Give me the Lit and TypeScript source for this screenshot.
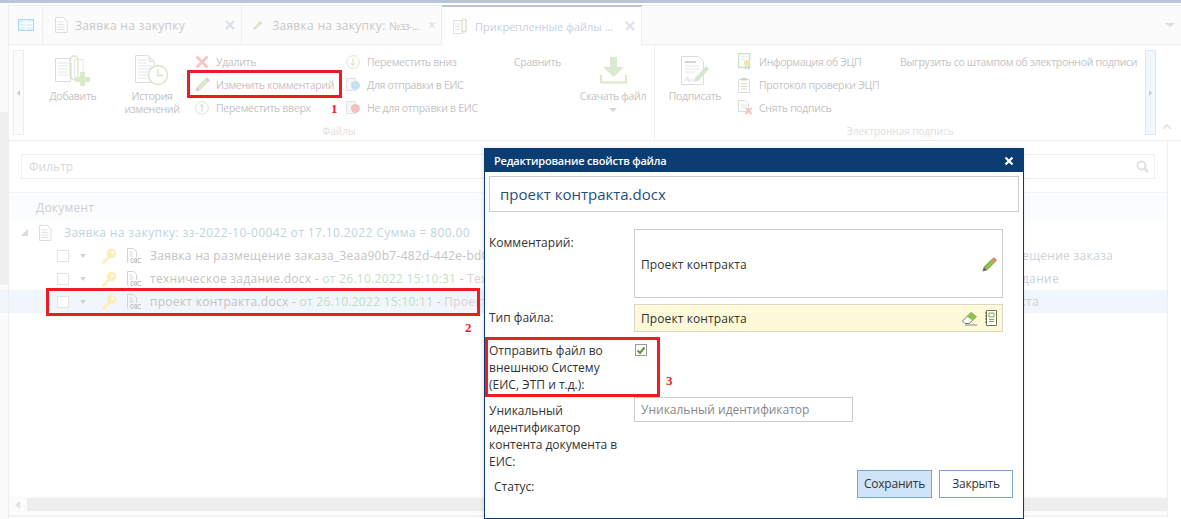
import { LitElement, html, css } from "lit";
import { customElement } from "lit/decorators.js";

// icons, already washed out like the page behind the dialog
const docLines = html`<svg width="14" height="16" viewBox="0 0 14 16"><path d="M1.500.500h8l3.500 3.500v11.500h-11.500z" fill="#fff" stroke="#dedede"/><path d="M3.500 5h6M3.500 7.500h7M3.500 10h7M3.500 12.500h7" stroke="#e2e2e2"/></svg>`;
const pencil = (w = 18) => html`<svg width="${w}" height="${w}" viewBox="0 0 16 16"><path d="M2 10.500 10.500 2l3.500 3.500L5.500 14z" fill="#d8e7ca"/><path d="M4 12.500 12 4.500" stroke="#e9f1e0"/><path d="M10.500 2l1.500-1.500h1l2.500 2.500v1L14 5.500z" fill="#f4c6ca"/><path d="M2 10.500 5.500 14 .5 15.500z" fill="#cdcdcd"/></svg>`;
const tabGrid = html`<svg width="16" height="12" viewBox="0 0 16 12"><rect x=".5" y=".5" width="15" height="11" fill="#dff1fb" stroke="#a9d8f2"/><path d="M8 1v10M9 4h6M9 7.500h6M2 4h5M2 7.500h5" stroke="#fff" stroke-width="1.500"/></svg>`;
const clipSmall = html`<svg width="15" height="16" viewBox="0 0 15 16"><path d="M.5 2.500h9v13h-9z" fill="#fff" stroke="#dfdfdf"/><path d="M2 6h5M2 8.500h5M2 11h5" stroke="#e4e4e4"/><path d="M9 12V3a2 2 0 0 1 4 0v9a1.800 1.800 0 0 1-4 0" fill="#fff" stroke="#cfe0bf" stroke-width="1.200"/></svg>`;
const tabClose = html`<svg width="10" height="10" viewBox="0 0 10 10"><path d="M1 1l8 8M9 1 1 9" stroke="#dbe1ea" stroke-width="2.200"/></svg>`;
const addIcon = html`<svg width="36" height="31" viewBox="0 0 36 31"><path d="M.5 3.500h15v23h-15z" fill="#fff" stroke="#dcdcdc"/><path d="M3 8h10M3 11h10M3 14h10M3 17h10M3 20h10" stroke="#e6e6e6"/><path d="M19.500 4.500h8.500v18h-8.500z" fill="#fff" stroke="#e6e6e6"/><path d="M15 21V5a4 4 0 0 1 8 0v16a3.500 3.500 0 0 1-7 0V8" fill="none" stroke="#d6e6c9" stroke-width="1.300"/><path d="M25 17h5v5h5v5h-5v4h-5v-4h-5v-5h5z" fill="#d8ebca"/></svg>`;
const historyIcon = html`<svg width="34" height="31" viewBox="0 0 34 31"><path d="M.5.500h13l6 6v21h-19z" fill="#fff" stroke="#dedede"/><path d="M14 1v5.500h5" fill="#f1f1f1" stroke="#e2e2e2"/><path d="M3 5h9M3 8h9M3 11h14M3 14h14M3 17h10M3 20h10M3 23h9" stroke="#e6e6e6"/><circle cx="23" cy="20" r="9.500" fill="#fff" stroke="#d3e4c6" stroke-width="1.300"/><path d="M23 14v6.500h5" fill="none" stroke="#d3e4c6" stroke-width="1.300"/></svg>`;
const cross = html`<svg width="14" height="14" viewBox="0 0 14 14"><path d="M1.500 1.500l11 11M12.500 1.500l-11 11" stroke="#f5c3c1" stroke-width="2.600"/></svg>`;
const arrowCircle = (up: boolean) => html`<svg width="14" height="14" viewBox="0 0 14 14"><circle cx="7" cy="7" r="6.300" fill="#fff" stroke="#dbe5d2"/><path d="${up ? "M7 11V3.500M4.500 6 7 3.500 9.500 6" : "M7 3v7.500M4.500 8 7 10.500 9.500 8"}" fill="none" stroke="#cfe0bf"/></svg>`;
const globeDoc = (minus: boolean) => html`<svg width="15" height="15" viewBox="0 0 15 15"><path d="M.5 1.500h9v12h-9z" fill="#f7f7f7" stroke="#e3e3e3"/><circle cx="9.500" cy="8.500" r="4.500" fill="${minus ? "#f5bfbf" : "#c6e1f4"}"/>${minus ? html`<path d="M7 8.500h5" stroke="#fff" stroke-width="2"/>` : html`<path d="M7 6.500c2 0 3.500 1 2.500 2.500s-2 1-2 3" fill="none" stroke="#e6f3fb" stroke-width="1.500"/>`}</svg>`;
const download = html`<svg width="27" height="27" viewBox="0 0 27 27"><path d="M10 0h7v10h7L13.500 20 3 10h7z" fill="#dbe9cf"/><path d="M1 18v7.500h25V18" fill="none" stroke="#dbe9cf" stroke-width="2"/></svg>`;
const signIcon = html`<svg width="28" height="29" viewBox="0 0 28 29"><path d="M.5.500h17l5 5v23h-22z" fill="#fff" stroke="#dcdcdc"/><path d="M4 6h11" stroke="#d4d4d4" stroke-width="2"/><path d="M4 10h14M4 13h14M4 16h10" stroke="#e6e6e6"/><path d="M4 25c2-5 3-4 3-1s2 1 3 0 1 1 3 0" fill="none" stroke="#d0dbe6"/><path d="M14 22 25 10l3 3-11 12-4 1z" fill="#d8e7ca"/></svg>`;
const certIcon = html`<svg width="14" height="17" viewBox="0 0 14 17"><path d="M.5.500h11v14h-11z" fill="#fff" stroke="#cfe2c0" stroke-width="1.500"/><path d="M3 4h6M3 6.500h4" stroke="#dfe9d6"/><circle cx="9" cy="10" r="3" fill="#f6e3ac"/><path d="M7 13h1.500v3H7zM10 13h1.500v3H10z" fill="#bcd3ea"/></svg>`;
const clipboard = html`<svg width="12" height="16" viewBox="0 0 12 16"><path d="M.5 2.500h11v13H.5z" fill="#fff" stroke="#dcdcdc"/><path d="M3.500 1h5v2.500h-5z" fill="#cfcfcf"/><path d="M3 7h6M3 9.500h6M3 12h6" stroke="#d0e2c1"/></svg>`;
const unsign = html`<svg width="15" height="15" viewBox="0 0 15 15"><path d="M.5.500h7l3 3v8h-10z" fill="#fff" stroke="#dcdcdc"/><path d="M2.500 5h6M2.500 7h5" stroke="#e4e4e4"/><path d="M7.500 8l6 6M13.500 8l-6 6" stroke="#f5c3c1" stroke-width="2"/></svg>`;
const key = html`<svg width="16" height="16" viewBox="0 0 16 16"><circle cx="10.500" cy="5.500" r="4.800" fill="#fbeebb"/><circle cx="11.500" cy="4.500" r="1.300" fill="#fff"/><path d="M7 8 1 14v1.500h3V14h2v-2l3-2z" fill="#fbeebb"/></svg>`;
const docFile = html`<svg width="16" height="16" viewBox="0 0 16 16"><path d="M1.500.500h6l3 3v5.500M1.500.500v14" fill="none" stroke="#d4d4d4"/><path d="M3.500 4h3M3.500 6h4M3.500 8h4" stroke="#dadada"/><path d="M5 10.500h2c1 0 1 4 0 4H5zM9 10.500h1.500v4H9zM12 10.500h3M12 10.500v4h3" fill="none" stroke="#c6c6c6"/></svg>`;
const searchIcon = html`<svg width="13" height="13" viewBox="0 0 13 13"><circle cx="5.500" cy="5.500" r="4" fill="none" stroke="#e2e2e2" stroke-width="2"/><path d="M8.500 8.500l3.500 3.500" stroke="#e2e2e2" stroke-width="2.500"/></svg>`;
const eraser = html`<svg width="16" height="15" viewBox="0 0 16 15"><path d="M.5 10 9 1.500l5 4-6.500 7H3z" fill="#fff" stroke="#777"/><path d="M5 5.500 9 1.500l6 4-4 4.500z" fill="#8fc249"/><path d="M3 14h12" stroke="#888"/></svg>`;
const lookup = html`<svg width="12" height="16" viewBox="0 0 12 16"><path d="M1.500.500h10v15h-10z" fill="#fff" stroke="#6b7a55"/><path d="M4 3h5v4H4z" fill="#fff" stroke="#7eaa3a"/><path d="M4 9.500h5M4 11.500h5" stroke="#7eaa3a"/><path d="M0 3h2M0 6h2M0 9h2M0 12h2" stroke="#555"/></svg>`;
const pencilDark = html`<svg width="15" height="15" viewBox="0 0 16 16"><path d="M2 10.500 10.500 2l3.500 3.500L5.500 14z" fill="#7fb63c"/><path d="M4 12.500 12 4.500" stroke="#b6d88c"/><path d="M10.500 2l1.500-1.500h1l2.500 2.500v1L14 5.500z" fill="#e8707c"/><path d="M2 10.500 5.500 14 .5 15.500z" fill="#666"/></svg>`;

const smallCols = [
  [
    { icon: cross, text: "Удалить" },
    { icon: pencil(15), text: "Изменить комментарий" },
    { icon: arrowCircle(true), text: "Переместить вверх" },
  ],
  [
    { icon: arrowCircle(false), text: "Переместить вниз" },
    { icon: globeDoc(false), text: "Для отправки в ЕИС" },
    { icon: globeDoc(true), text: "Не для отправки в ЕИС" },
  ],
];

const signCol = [
  { icon: certIcon, text: "Информация об ЭЦП" },
  { icon: clipboard, text: "Протокол проверки ЭЦП" },
  { icon: unsign, text: "Снять подпись" },
];

const rows = [
  { name: "Заявка на размещение заказа_3eaa90b7-482d-442e-bd0c-51f0a7c1e2aa.docx", date: "", note: "", tail: "Заявка на размещение заказа", end: 1113, sel: false },
  { name: "техническое задание.docx", date: "от 26.10.2022 15:10:31", note: "Техническое задание", tail: "Техническое задание", end: 1059, sel: false },
  { name: "проект контракта.docx", date: "от 26.10.2022 15:10:11", note: "Проект контракта", tail: "Проект контракта", end: 1039, sel: true },
];

@customElement("app-root")
export class AppRoot extends LitElement {
  static styles = css`
    :host {
      display: block;
      position: relative;
      width: 1181px;
      height: 519px;
      overflow: hidden;
      background: #fff;
      font-family: "Open Sans", "Noto Sans", sans-serif;
      font-size: 11px;
      color: #c4c4c4;
    }
    .topbar {
      height: 3px;
      background: #b9c6da;
    }
    .shell {
      display: flex;
      height: 516px;
    }
    .rail {
      width: 8px;
      flex: none;
      background: #fbfbfb;
      border-right: 1px solid #eee;
      padding-top: 109px;
      box-sizing: content-box;
    }
    .rail-thumb {
      height: 173px;
      background: #f0f0f0;
    }
    .rail-sel {
      height: 23px;
      margin-top: 5px;
      background: #f0f6fc;
    }
    .main {
      flex: 1;
      min-width: 0;
      display: flex;
      flex-direction: column;
      padding-top: 2px;
    }

    /* tabs */
    .tabs {
      display: flex;
      height: 40px;
      background: #fbfbfb;
      border-top: 1px solid #eee;
      border-bottom: 1px solid #eee;
      box-sizing: border-box;
    }
    .tab-home {
      width: 33px;
      display: flex;
      align-items: center;
      justify-content: center;
      border-right: 1px solid #eee;
      box-sizing: content-box;
    }
    .tab {
      width: 199px;
      display: flex;
      align-items: center;
      gap: 7px;
      padding: 0 6px 0 11px;
      box-sizing: border-box;
      border-right: 1px solid #eee;
      font-size: 12px;
      letter-spacing: 0.3px;
      color: #c9c9c9;
    }
    .tab + .tab {
      width: 200px;
    }
    .tab.wide-gap {
      gap: 10px;
    }
    .tab span {
      flex: 1;
      white-space: nowrap;
    }
    .tab small {
      font-size: 11px;
      letter-spacing: -0.6px;
    }
    .tab.active {
      background: #fff;
      color: #c4d2e6;
      font-size: 11px;
      letter-spacing: 0;
      margin-top: -1px;
      margin-bottom: -1px;
      border-top: 2px solid #b9c6da;
    }
    .tabs-more {
      margin-left: auto;
      align-self: center;
      margin-right: 6px;
      border: 4px solid transparent;
      border-top: 4px solid #dedede;
      border-left-width: 5px;
      border-right-width: 5px;
      margin-top: 4px;
    }

    /* ribbon */
    .ribbon {
      display: flex;
      height: 96px;
      border-bottom: 1px solid #eee;
      box-sizing: border-box;
      font-size: 10.5px;
      letter-spacing: -0.3px;
    }
    .scroll {
      width: 11px;
      height: 85px;
      margin-top: 5px;
      flex: none;
      box-sizing: border-box;
      border: 1px solid #eee;
      background: #fbfbfb;
      display: flex;
      align-items: center;
      justify-content: center;
    }
    .scroll.left {
      margin-left: 4px;
    }
    .scroll.right {
      background: #f2f7fc;
      border-color: #dfe7f1;
    }
    .tri-left {
      border: 3px solid transparent;
      border-right: 3px solid #ccc;
      border-left: 0;
    }
    .tri-right {
      border: 3px solid transparent;
      border-left: 3px solid #ccc;
      border-right: 0;
    }
    .group {
      display: flex;
      flex-direction: column;
      box-sizing: border-box;
      flex: none;
    }
    .group.files {
      width: 631px;
      border-right: 1px solid #eee;
    }
    .group.sign {
      width: 490px;
    }
    .group-body {
      display: flex;
      flex: 1;
      padding-top: 5px;
    }
    .group-name {
      text-align: center;
      height: 20px;
      padding-top: 5px;
      box-sizing: border-box;
      line-height: 13px;
      font-size: 10px;
      letter-spacing: 0;
      color: #e0e0e0;
    }
    .big {
      display: flex;
      flex-direction: column;
      align-items: center;
      text-align: center;
      line-height: 13px;
      flex: none;
    }
    .big-icon {
      height: 37px;
      display: flex;
      align-items: center;
      margin-top: 2px;
      margin-bottom: 1px;
    }
    .caret {
      margin-top: 5px;
      border: 4px solid transparent;
      border-top: 4px solid #d6d6d6;
    }
    .col {
      flex: none;
      display: flex;
      flex-direction: column;
    }
    .small {
      height: 23px;
      display: flex;
      align-items: center;
      white-space: nowrap;
    }
    .small i {
      width: 21px;
      flex: none;
      display: flex;
      font-style: normal;
    }
    .chevron {
      align-self: flex-end;
      margin: 0 0 10px 6px;
      line-height: 0;
    }

    /* list */
    .content {
      flex: 1;
      display: flex;
      min-height: 0;
    }
    .panel {
      width: 1159px;
      border-right: 1px solid #eee;
      box-sizing: border-box;
      display: flex;
      flex-direction: column;
      margin-bottom: 2px;
      border-bottom: 2px solid #f2f2f2;
    }
    .filter {
      margin: 13px 12px 0 12px;
      height: 25px;
      border: 1px solid #eee;
      box-sizing: border-box;
      display: flex;
      align-items: center;
      justify-content: space-between;
      padding: 0 5px 0 7px;
      font-size: 12px;
      color: #d8d8d8;
      flex: none;
    }
    .head {
      margin-top: 13px;
      height: 29px;
      flex: none;
      background: #fbfcfe;
      border-top: 1px solid #f1f4f8;
      box-sizing: border-box;
      padding-left: 27px;
      line-height: 29px;
      font-size: 12px;
      letter-spacing: 0.2px;
      color: #cfcfcf;
    }
    .tree-root {
      height: 23px;
      flex: none;
      display: flex;
      align-items: center;
      padding-left: 12px;
      white-space: nowrap;
      font-size: 12px;
      letter-spacing: 0.38px;
      color: #bcd6de;
    }
    .tree-root u {
      width: 0;
      height: 0;
      border-style: solid;
      border-width: 0 0 7px 7px;
      border-color: transparent transparent #d9d9d9 transparent;
      margin-right: 10px;
    }
    .tree-root span {
      margin-left: 12px;
    }
    .row {
      height: 23px;
      flex: none;
      display: flex;
      align-items: center;
      padding-left: 48px;
      white-space: nowrap;
      font-size: 12px;
      letter-spacing: 0.28px;
      position: relative;
    }
    .row.sel {
      background: #f0f6fc;
    }
    .box {
      width: 12px;
      height: 12px;
      border: 1px solid #e4e4e4;
      background: #fff;
      box-sizing: border-box;
      flex: none;
    }
    .row u {
      flex: none;
      border: 3px solid transparent;
      border-top: 4px solid #d2d2d2;
      margin: 3px 15px 0 11px;
    }
    .row .kd {
      display: flex;
      gap: 9px;
      margin-right: 8px;
      flex: none;
    }
    .row .name {
      flex: none;
      width: 334px;
      overflow: hidden;
      line-height: 23px;
    }
    .row em {
      font-style: normal;
      color: #c2dfc4;
    }
    .row s {
      text-decoration: none;
      color: #e3cfcf;
    }
    .tail {
      position: absolute;
      top: 0;
      left: 1015px;
      display: flex;
      justify-content: flex-end;
      overflow: hidden;
      line-height: 23px;
      color: #ccd3da;
    }
    .spacer {
      flex: 1;
    }
    .hscroll {
      height: 17px;
      flex: none;
      background: #fbfbfb;
      display: flex;
      align-items: center;
      padding-left: 6px;
      margin-bottom: 2px;
    }
    .hscroll div {
      flex: 1;
      margin-left: 7px;
      height: 13px;
      background: #eee;
    }

    /* dialog */
    .dialog {
      position: absolute;
      left: 484px;
      top: 148px;
      width: 540px;
      height: 371px;
      box-sizing: border-box;
      border: 1px solid #0b3d73;
      background: #fff;
      box-shadow: -1px 0 4px rgba(0, 0, 0, 0.12);
      font-size: 12px;
      line-height: 17px;
      color: #333;
      display: flex;
      flex-direction: column;
    }
    .dlg-head {
      height: 23px;
      flex: none;
      background: #0b3d73;
      color: #fff;
      display: flex;
      align-items: center;
      justify-content: space-between;
      padding: 0 9px;
      font-size: 11px;
      font-weight: 600;
      letter-spacing: -0.2px;
    }
    .dlg-name {
      margin: 4px 4px 0 4px;
      height: 36px;
      flex: none;
      box-sizing: border-box;
      border: 1px solid #ccc;
      padding-left: 10px;
      line-height: 34px;
      font-size: 15px;
      color: #1f4f80;
    }
    .form {
      display: grid;
      grid-template-columns: 145px 369px;
      padding-left: 4px;
      margin-top: 17px;
    }
    .form .lbl {
      padding-top: 5px;
    }
    .comment {
      height: 69px;
      box-sizing: border-box;
      border: 1px solid #ccc;
      display: flex;
      align-items: center;
      justify-content: space-between;
      padding: 1px 5px 0 6px;
      letter-spacing: 0.1px;
    }
    .ftype {
      margin-top: 6px;
      height: 28px;
      box-sizing: border-box;
      border: 1px solid #d9d9c8;
      background: #fdf9d9;
      display: flex;
      align-items: center;
      padding: 0 5px 0 6px;
      gap: 7px;
      letter-spacing: 0.1px;
    }
    .ftype span {
      flex: 1;
    }
    .lbl.t2 {
      margin-top: 6px;
      padding-top: 5px;
    }
    .lbl.send {
      padding-top: 0;
      margin-top: 10px;
      width: 135px;
    }
    .check {
      margin: 12px 0 0 1px;
      width: 12px;
      height: 12px;
      border: 1px solid #999;
      box-sizing: border-box;
      background: #fff;
      display: flex;
      align-items: center;
      justify-content: center;
    }
    .lbl.uid {
      margin-top: 4px;
      padding-top: 5px;
      width: 130px;
    }
    .uid-input {
      margin-top: 4px;
      width: 219px;
      height: 25px;
      box-sizing: border-box;
      border: 1px solid #ccc;
      line-height: 23px;
      padding-left: 6px;
      color: #888;
    }
    .foot {
      display: flex;
      padding: 0 10px 0 9px;
      height: 28px;
    }
    .foot .status {
      flex: 1;
      padding-top: 8px;
    }
    .btn {
      width: 74px;
      height: 28px;
      box-sizing: border-box;
      border: 1px solid #7ba3cd;
      background: #fff;
      text-align: center;
      line-height: 26px;
      letter-spacing: -0.2px;
      margin-left: 7px;
    }
    .btn.primary {
      width: 75px;
      background: #cfe5f7;
    }

    /* annotations */
    .mark {
      position: absolute;
      box-sizing: border-box;
      border: 3px solid #ed1c24;
    }
    .m1 {
      left: 187px;
      top: 70px;
      width: 155px;
      height: 28px;
    }
    .m2 {
      left: 46px;
      top: 288px;
      width: 434px;
      height: 28px;
    }
    .m3 {
      left: 485px;
      top: 337px;
      width: 175px;
      height: 60px;
    }
    .num {
      position: absolute;
      font-family: "Liberation Serif", serif;
      font-weight: 700;
      font-size: 13px;
      line-height: 14px;
      color: #ed1c24;
    }
    .n1 {
      left: 331px;
      top: 102px;
    }
    .n2 {
      left: 465px;
      top: 321px;
    }
    .n3 {
      left: 666px;
      top: 374px;
    }
  `;

  render() {
    return html`
      <div class="topbar"></div>
      <div class="shell">
        <div class="rail">
          <div class="rail-thumb"></div>
          <div class="rail-sel"></div>
        </div>
        <div class="main">
          <div class="tabs">
            <div class="tab-home">${tabGrid}</div>
            <div class="tab">${docLines}<span>Заявка на закупку</span>${tabClose}</div>
            <div class="tab wide-gap">${pencil(15)}<span>Заявка на закупку: <small>№зз-...</small></span>${tabClose}</div>
            <div class="tab active">${clipSmall}<span>Прикрепленные файлы ...</span>${tabClose}</div>
            <div class="tabs-more"></div>
          </div>
          <div class="ribbon">
            <div class="scroll left"><div class="tri-left"></div></div>
            <div class="group files">
              <div class="group-body">
                <div class="big" style="width:80px;margin-left:9px">
                  <div class="big-icon">${addIcon}</div>
                  Добавить
                </div>
                <div class="big" style="width:78px">
                  <div class="big-icon">${historyIcon}</div>
                  История<br />изменений
                </div>
                ${smallCols.map(
                  (col, i) => html`
                    <div class="col" style="width:${i ? 168 : 150}px;margin-left:${i ? 1 : 4}px">
                      ${col.map((it) => html`<div class="small"><i>${it.icon}</i>${it.text}</div>`)}
                    </div>
                  `
                )}
                <div class="col" style="width:59px">
                  <div class="small">Сравнить</div>
                </div>
                <div class="big" style="width:80px">
                  <div class="big-icon">${download}</div>
                  Скачать файл
                  <div class="caret"></div>
                </div>
              </div>
              <div class="group-name">Файлы</div>
            </div>
            <div class="group sign">
              <div class="group-body">
                <div class="big" style="width:70px;margin-left:5px">
                  <div class="big-icon">${signIcon}</div>
                  Подписать
                </div>
                <div class="col" style="width:162px;margin-left:8px">
                  ${signCol.map((it) => html`<div class="small"><i>${it.icon}</i>${it.text}</div>`)}
                </div>
                <div class="col">
                  <div class="small">Выгрузить со штампом об электронной подписи</div>
                </div>
              </div>
              <div class="group-name">Электронная подпись</div>
            </div>
            <div class="scroll right"><div class="tri-right"></div></div>
            <div class="chevron">
              <svg width="10" height="6" viewBox="0 0 10 6"><path d="M1 5l4-4 4 4" fill="none" stroke="#e0e0e0" stroke-width="1.500" /></svg>
            </div>
          </div>
          <div class="content">
            <div class="panel">
              <div class="filter">Фильтр ${searchIcon}</div>
              <div class="head">Документ</div>
              <div class="tree-root">
                <u></u>${docLines}<span>Заявка на закупку: зз-2022-10-00042 от 17.10.2022 Сумма = 800.00</span>
              </div>
              ${rows.map(
                (r) => html`
                  <div class="row ${r.sel ? "sel" : ""}">
                    <div class="box"></div>
                    <u></u>
                    <div class="kd">${key}${docFile}</div>
                    <span class="name">${r.name}${r.date ? html` - <em>${r.date}</em> - <s>${r.note}</s>` : ""}</span>
                    <div class="tail" style="right:${1167 - r.end}px">${r.tail}</div>
                  </div>
                `
              )}
              <div class="spacer"></div>
              <div class="hscroll">
                <svg width="5" height="8" viewBox="0 0 5 8"><path d="M5 0v8L0 4z" fill="#e2e2e2" /></svg>
                <div></div>
              </div>
            </div>
          </div>
        </div>
      </div>

      <div class="dialog">
        <div class="dlg-head">
          Редактирование свойств файла
          <svg width="10" height="10" viewBox="0 0 10 10"><path d="M1.500 1.500l7 7M8.500 1.500l-7 7" stroke="#fff" stroke-width="2.200" /></svg>
        </div>
        <div class="dlg-name">проект контракта.docx</div>
        <div class="form">
          <div class="lbl">Комментарий:</div>
          <div class="comment">Проект контракта ${pencilDark}</div>
          <div class="lbl t2">Тип файла:</div>
          <div class="ftype"><span>Проект контракта</span>${eraser}${lookup}</div>
          <div class="lbl send">Отправить файл во внешнюю Систему (ЕИС, ЭТП и т.д.):</div>
          <div>
            <div class="check">
              <svg width="10" height="9" viewBox="0 0 10 9"><path d="M1.500 4.500 4 7l4.500-5.500" fill="none" stroke="#5f9a2e" stroke-width="2" /></svg>
            </div>
          </div>
          <div class="lbl uid">Уникальный идентификатор контента документа в ЕИС:</div>
          <div><div class="uid-input">Уникальный идентификатор</div></div>
        </div>
        <div class="foot">
          <div class="status">Статус:</div>
          <div class="btn primary">Сохранить</div>
          <div class="btn">Закрыть</div>
        </div>
      </div>

      <div class="mark m1"></div>
      <div class="mark m2"></div>
      <div class="mark m3"></div>
      <div class="num n1">1</div>
      <div class="num n2">2</div>
      <div class="num n3">3</div>
    `;
  }
}
